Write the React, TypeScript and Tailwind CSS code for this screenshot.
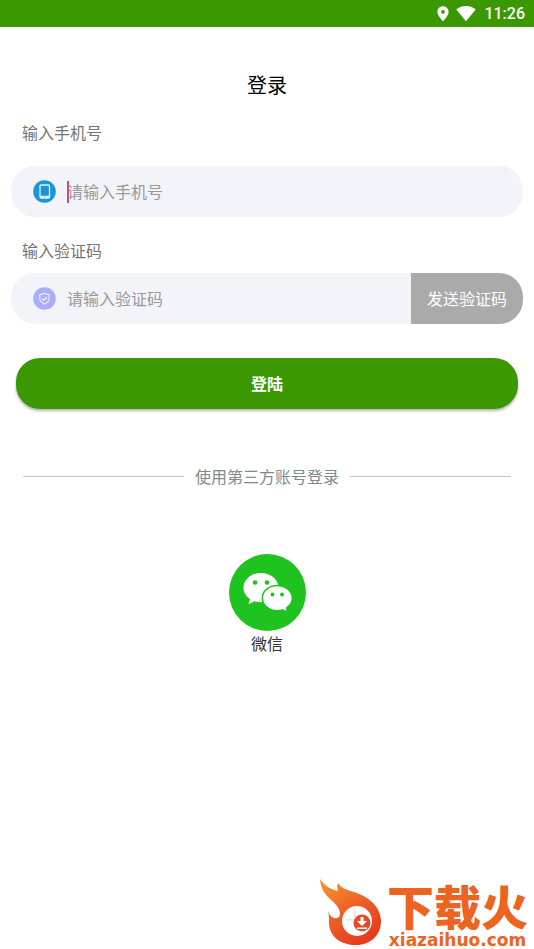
import { useState } from 'react';

function StatusBar() {
  return (
    <header className="flex h-[27px] items-center justify-end bg-[#3b9800] pr-[9px] font-[Roboto,sans-serif] text-white">
      <svg className="mr-[7px] h-4 w-3" viewBox="0 0 12 16" fill="currentColor" aria-hidden="true">
        <path
          fillRule="evenodd"
          d="M6 .3C2.900.3.4 2.700.4 5.800.4 9.800 6 15.400 6 15.400s5.600-5.600 5.600-9.600C11.600 2.700 9.100.3 6 .3Zm0 3.600a1.900 1.900 0 1 1 0 3.800 1.900 1.900 0 0 1 0-3.800Z"
        />
      </svg>
      <svg className="mr-2 h-4 w-5" viewBox="0 0 20 16" fill="currentColor" aria-hidden="true">
        <path d="M.3 3.400C3 1.200 6.300 0 10 0s7 1.200 9.700 3.400L10 15.200Z" />
      </svg>
      <span className="text-base font-medium">11:26</span>
    </header>
  );
}

function PhoneIcon() {
  return (
    <svg className="size-[23px] shrink-0" viewBox="0 0 23 23" aria-hidden="true">
      <circle cx="11.5" cy="11.5" r="11.300" fill="#1c94d6" />
      <rect x="7" y="5" width="9.500" height="13" rx="1.300" fill="#1c94d6" stroke="#e4f5ff" strokeWidth="1.300" />
      <path d="M7 15.700h9.500v1.300a1 1 0 0 1-1 1H8a1 1 0 0 1-1-1Z" fill="#e4f5ff" />
      <circle cx="11.700" cy="16.800" r=".6" fill="#1c94d6" />
    </svg>
  );
}

function ShieldIcon() {
  return (
    <svg className="size-[23px] shrink-0" viewBox="0 0 23 23" fill="none" aria-hidden="true">
      <circle cx="11.5" cy="11.5" r="11.300" fill="#a9aef8" />
      <path
        d="M11.500 6.200c1.500 1 3 1.300 4.700 1.400v4c0 2.600-2 4.300-4.700 5.500-2.700-1.200-4.700-2.900-4.700-5.500v-4c1.700-.1 3.200-.4 4.700-1.400Z"
        stroke="#eef0ff"
        strokeWidth="1.100"
        strokeLinejoin="round"
      />
      <path d="m9.300 11.500 1.700 1.700 3-3.200" stroke="#eef0ff" strokeWidth="1.200" />
    </svg>
  );
}

function WechatIcon() {
  return (
    <svg className="size-[77px]" viewBox="0 0 77 77" aria-hidden="true">
      <circle cx="38.500" cy="38.500" r="38.500" fill="#1fc31f" />
      <path
        d="M32 19c-9.700 0-17.500 6.500-17.500 14.700 0 4.600 2.500 8.600 6.500 11.300l-1.500 5.300 6.200-3.100c2 .6 4.100 1 6.300 1 9.700 0 17.500-6.400 17.500-14.500S41.700 19 32 19Z"
        fill="#fff"
      />
      <path
        d="M48.300 31.500c-8.300 0-15 5.600-15 12.600s6.700 12.600 15 12.600c1.900 0 3.700-.3 5.400-.8l5.100 2.600-1.300-4.400c3.500-2.300 5.800-5.900 5.800-10 0-7-6.700-12.600-15-12.600Z"
        fill="#fff"
        stroke="#1fc31f"
        strokeWidth="1.500"
      />
      <g fill="#1fc31f">
        <circle cx="26" cy="28.500" r="2.300" />
        <circle cx="38" cy="28.500" r="2.300" />
        <circle cx="43.500" cy="40.500" r="1.900" />
        <circle cx="53" cy="40.500" r="1.900" />
      </g>
    </svg>
  );
}

function Watermark() {
  return (
    <div className="absolute right-[6px] bottom-0 flex items-end gap-[5px] text-[#ec6420]">
      <svg className="mb-[3px] h-[68px] w-[63px]" viewBox="0 0 63 68" aria-hidden="true">
        <defs>
          <linearGradient id="flame" x1="0" y1="0" x2=".6" y2="1">
            <stop offset="0" stopColor="#f99a2c" />
            <stop offset=".5" stopColor="#ee6428" />
            <stop offset="1" stopColor="#e53d1d" />
          </linearGradient>
        </defs>
        <path
          d="M1 1C7 9 13 12 19 13c-1-3-1-5 0-8 3 5 9 7 16 9 16 5 27 16 27 29 0 14-10 24-25 24C22 67 11 59 10 46c0-5 0-9-1-13 2 5 5 8 9 7s4-6 0-12C13 21 2 17 1 1Z"
          fill="url(#flame)"
        />
        <circle cx="38" cy="43" r="15" fill="#fff" />
        <path d="M35 30h1.500v10H35ZM27 41h8v1.500h-8Z" fill="#ede5e1" />
        <circle cx="43" cy="45" r="8.500" fill="#e54a26" />
        <path d="M41.500 39h3v4H48l-5 5-5-5h3.500ZM38 49.500h10V51H38Z" fill="#fff" />
      </svg>
      <div className="flex flex-col items-center">
        <span className="font-['Noto_Sans_CJK_SC',sans-serif] text-[47px] leading-[52px] font-black">下载火</span>
        <span className="font-['DejaVu_Sans',sans-serif] text-[17px] leading-[18px] font-bold">xiazaihuo.com</span>
      </div>
    </div>
  );
}

export default function App() {
  const [phone, setPhone] = useState('');
  const [code, setCode] = useState('');

  return (
    <div className="relative min-h-screen bg-white font-['Noto_Sans_CJK_SC',sans-serif]">
      <StatusBar />

      <main className="px-[11px] pt-11">
        <h1 className="text-center text-xl leading-7 text-black">登录</h1>

        <form onSubmit={(e) => e.preventDefault()}>
          <label htmlFor="phone" className="mt-[21px] block pl-[11px] text-base text-[#747474]">
            输入手机号
          </label>
          <div className="mt-[22px] flex h-[51px] items-center gap-[11px] rounded-3xl bg-[#f3f4f9] pl-[22px]">
            <PhoneIcon />
            <div className="relative flex-1">
              <input
                id="phone"
                type="tel"
                value={phone}
                onChange={(e) => setPhone(e.target.value)}
                placeholder="请输入手机号"
                className="block h-[22px] w-full pb-0.5 text-base text-gray-800 caret-[#d24b78] outline-none placeholder:text-[#999999]"
              />
              {/* text cursor */}
              {!phone && <span className="absolute inset-y-0 left-0 w-0.5 bg-[#d24b78]"></span>}
            </div>
          </div>

          <label htmlFor="code" className="mt-[21px] block pl-[11px] text-base text-[#747474]">
            输入验证码
          </label>
          <div className="mt-[11px] flex h-[51px] items-center gap-[11px] overflow-hidden rounded-3xl bg-[#f3f4f9] pl-[22px]">
            <ShieldIcon />
            <input
              id="code"
              type="text"
              value={code}
              onChange={(e) => setCode(e.target.value)}
              placeholder="请输入验证码"
              className="h-[22px] min-w-0 flex-1 pb-0.5 text-base text-gray-800 outline-none placeholder:text-[#999999]"
            />
            <button type="button" className="h-full bg-[#aaaaaa] px-4 pb-0.5 text-base text-white">
              发送验证码
            </button>
          </div>

          <div className="mt-[34px] px-[5px]">
            <button
              type="submit"
              className="h-[51px] w-full rounded-3xl bg-[#3b9800] pb-0.5 text-base font-bold text-white shadow-[0_2px_3px_rgba(0,0,0,0.3)]"
            >
              登陆
            </button>
          </div>
        </form>

        <div className="mt-[55px] flex items-center gap-[11px] px-3">
          <div className="h-px flex-1 bg-[#c2c6c8]"></div>
          <span className="text-base text-[#7e8a90]">使用第三方账号登录</span>
          <div className="h-px flex-1 bg-[#c2c6c8]"></div>
        </div>

        <div className="mt-[66px] flex justify-center">
          <button type="button" className="flex flex-col items-center text-base text-[#333333]">
            <WechatIcon />
            微信
          </button>
        </div>
      </main>

      <Watermark />
    </div>
  );
}
